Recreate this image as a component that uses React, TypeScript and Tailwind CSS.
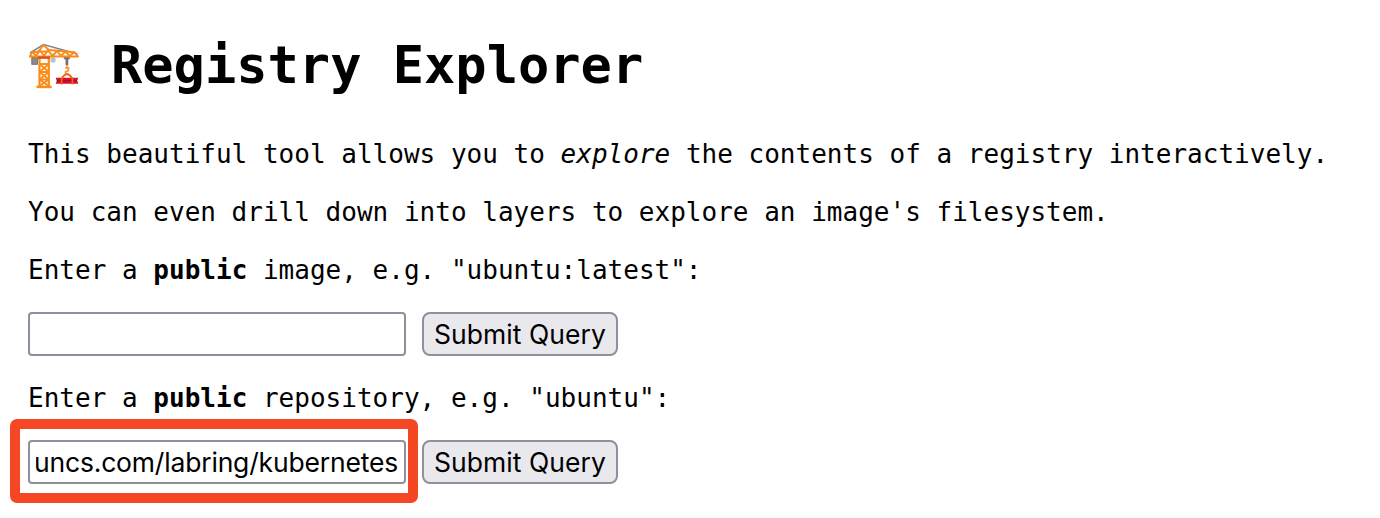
import React from "react";

function Crane() {
  return (
    <svg viewBox="0 0 52 48" className="block h-[48px] w-[52px]" fill="none">
      <path d="M2 11 L15.5 2.5 L49.5 12" stroke="#82858a" strokeWidth="1.6" />
      <rect x="3.8" y="15.5" width="5.6" height="6.8" fill="#8b8b8b" stroke="#616161" strokeWidth="0.8" />
      <path d="M35.8 15h6v2.2h-1.5v6h-2.8v-6h-1.7z" fill="#757575" />
      <rect x="22.5" y="15.5" width="5" height="5" rx="1" fill="#a9c7cf" />
      <g stroke="#fb8c1a" strokeWidth="1.9" strokeLinejoin="round">
        <path d="M1.7 14.5 L4.5 10 H10 L15.5 3.2 L21 8 L46.5 10.2 L50 14.5 Z" />
        <path d="M4.5 10 L8 14 L12 8.5 L16 14 L20 8.2 L24.5 14 L29 9 L33 14 L37.5 9.6 L41.5 14 L46 10.5 M9 9.5H21" />
        <path strokeWidth="2.2" d="M11.5 15V44.5M20.8 15V44.5" />
        <path d="M11.5 22H20.8M11.5 30H20.8M11.5 37.5H20.8M11.5 22L20.8 30M20.8 22L11.5 30M11.5 30L20.8 37.5M20.8 30L11.5 37.5M11.5 37.5L20.8 44M20.8 37.5L11.5 44" />
      </g>
      <rect x="10" y="14.5" width="12" height="2.3" fill="#dd4b16" />
      <rect x="8.5" y="43.6" width="15.2" height="2.6" fill="#fb8c1a" />
      <path d="M27.7 35.8H50.3l-1.1 3 1.1 3H27.7l1-3z" fill="#d5132c" />
      <path d="M29 38.7H48.8" stroke="#a60d27" strokeWidth="1.2" />
      <path d="M39 23V26M37.4 26H40.4V28.6L37.6 29.8V32H40.2" stroke="#fb9a36" strokeWidth="1.8" />
      <path d="M33.6 42.5V36.5Q39 28 44.4 36.5V42.5" stroke="#f4611e" strokeWidth="1.8" />
    </svg>
  );
}

const inputBox =
  "box-border h-[44px] w-[378px] rounded-[4px] border-2 border-[#8f8f9d] bg-white";

function SubmitButton() {
  return (
    <button
      type="submit"
      className="ml-4 flex h-[44px] w-[196px] items-center justify-center rounded-[8px] border-2 border-[#8f8f9d] bg-[#e9e9ed] font-['Inter',sans-serif] text-[26.5px] leading-[30px] tracking-[0.05px] whitespace-nowrap"
    >
      Submit Query
    </button>
  );
}

export default function App() {
  return (
    <main className="h-[518px] overflow-hidden bg-white pt-[35px] pl-[28px] font-['DejaVu_Sans_Mono',monospace] text-[26px] leading-[30px] tracking-[0.01px] text-black">
      <h1 className="flex h-[60px] items-start text-[52px] leading-[60px] font-bold tracking-normal whitespace-pre">
        <span className="mt-[7px] mr-[31px] shrink-0">
          <Crane />
        </span>
        Registry Explorer
      </h1>
      <p className="mt-[44px] whitespace-nowrap">
        This beautiful tool allows you to <em>explore</em> the contents of a registry interactively.
      </p>
      <p className="mt-[28px]">You can even drill down into layers to explore an image's filesystem.</p>
      <p className="mt-[28px]">
        Enter a <b>public</b> image, e.g. "ubuntu:latest":
      </p>
      <form className="mt-[27px] flex">
        <input aria-label="Image" className={inputBox} />
        <SubmitButton />
      </form>
      <p className="mt-[27px]">
        Enter a <b>public</b> repository, e.g. "ubuntu":
      </p>
      <form className="mt-[6px] -ml-[18px] flex">
        <div className="h-[84px] w-[408px] shrink-0 rounded-[7px] border-[10px] border-[#f54724] pt-[11px] pl-2">
          <div className={`${inputBox} px-[6px]`}>
            <div className="flex h-[40px] items-center justify-end overflow-hidden font-['Inter',sans-serif] text-[26.5px] leading-[30px] tracking-[-0.18px] whitespace-nowrap">
              <span>uncs.com/labring/kubernetes</span>
            </div>
          </div>
        </div>
        <div className="-ml-3 pt-[21px]">
          <SubmitButton />
        </div>
      </form>
    </main>
  );
}
